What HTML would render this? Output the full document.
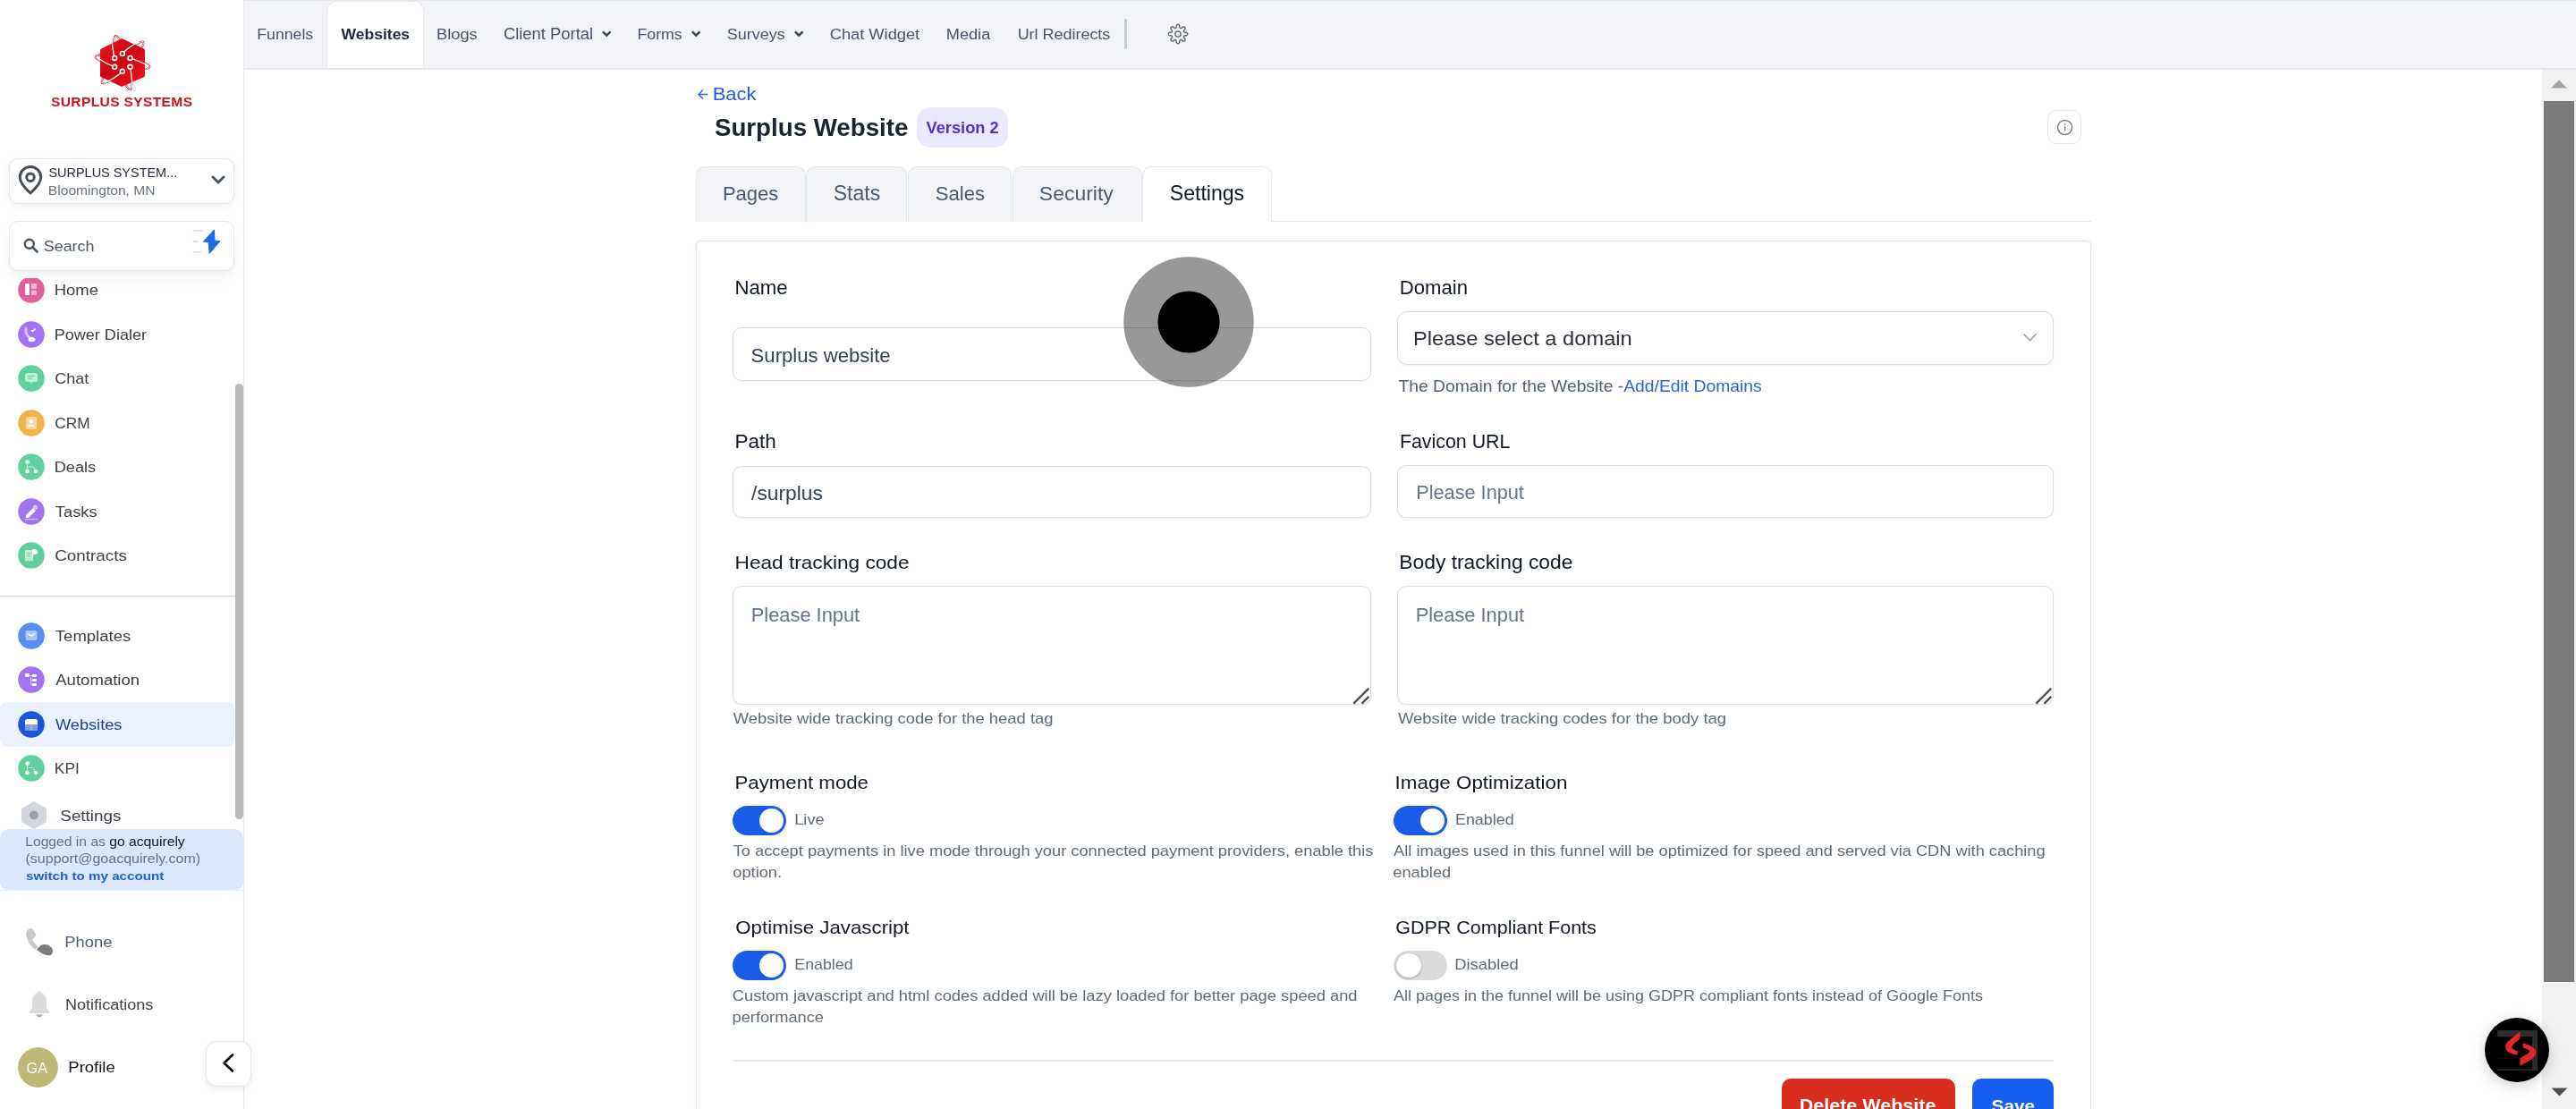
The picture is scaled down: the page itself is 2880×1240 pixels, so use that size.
<!DOCTYPE html>
<html><head><meta charset="utf-8"><title>Surplus Website Settings</title>
<style>
html,body{margin:0;padding:0;width:2880px;height:1240px;overflow:hidden;background:#fff;font-family:"Liberation Sans", sans-serif;}
#root{position:absolute;left:0;top:0;width:2880px;height:1240px;will-change:transform;background:#fff;}
.t{position:absolute;white-space:nowrap;font-family:"Liberation Sans", sans-serif;-webkit-font-smoothing:antialiased;}
.lay{will-change:transform;}
.r{position:absolute;}
</style></head><body><div id="root">
<div class="r" style="left:0.0px;top:0.0px;width:272.0px;height:1240.0px;background:#fff;"></div>
<div class="r" style="left:272.0px;top:0.0px;width:1.0px;height:1240.0px;background:#e6e8ec;"></div>
<svg class="r" style="left:105.5px;top:39.3px;" width="63" height="63" viewBox="123 62 1016 1016">
<defs>
<linearGradient id="lg" x1="0" y1="0" x2="1" y2="1"><stop offset="0" stop-color="#f01420"/><stop offset="0.45" stop-color="#c80812"/><stop offset="1" stop-color="#f2101c"/></linearGradient>
<mask id="outhex"><rect x="0" y="0" width="1300" height="1300" fill="#fff"/><polygon points="610,165 995,345 995,785 610,960 250,785 250,345" fill="#000"/></mask>
</defs>
<g mask="url(#outhex)" fill="none">
<g stroke="#c8141c" stroke-width="34">
<ellipse cx="630" cy="562" rx="500" ry="95" transform="rotate(74.5 630 562)"/>
<ellipse cx="625" cy="560" rx="525" ry="95" transform="rotate(-45 625 560)"/>
<ellipse cx="625" cy="550" rx="495" ry="95" transform="rotate(10.6 625 550)"/>
</g>
<g stroke="#fff" stroke-width="14">
<ellipse cx="630" cy="562" rx="500" ry="95" transform="rotate(74.5 630 562)"/>
<ellipse cx="625" cy="560" rx="525" ry="95" transform="rotate(-45 625 560)"/>
<ellipse cx="625" cy="550" rx="495" ry="95" transform="rotate(10.6 625 550)"/>
</g>
</g>
<polygon points="610,150 1005,335 1005,800 610,975 240,800 240,335" fill="url(#lg)" stroke="url(#lg)" stroke-width="40" stroke-linejoin="round"/>
<g fill="none" stroke="#fff" stroke-width="22" stroke-linecap="round">
<path d="M480 480 C450 350 430 250 430 120"/>
<path d="M620 400 C720 300 820 230 920 190"/>
<path d="M760 480 C880 520 980 560 1080 620"/>
<path d="M760 640 C780 760 800 880 800 1010"/>
<path d="M620 720 C520 820 420 880 300 920"/>
<path d="M480 640 C370 600 260 540 160 470"/>
</g>
<g fill="#d01018" stroke="#fff" stroke-width="26">
<circle cx="480" cy="480" r="40"/><circle cx="620" cy="400" r="40"/><circle cx="760" cy="480" r="40"/>
<circle cx="760" cy="640" r="40"/><circle cx="620" cy="720" r="40"/><circle cx="480" cy="640" r="40"/>
</g></svg>
<div class="t" style="left:57.19px;top:95px;font-size:13.8px;line-height:40px;color:#d0121c;font-weight:700;transform:scaleX(1.13);transform-origin:0 0;letter-spacing:0.3px;">SURPLUS SYSTEMS</div>
<div class="r" style="left:10.0px;top:177.0px;width:251.5px;height:51.0px;border:1px solid #e4e7ec;border-radius:10px;background:#fff;box-shadow:0 3px 8px rgba(16,24,40,0.06);box-sizing:border-box;"></div>
<svg class="r" style="left:20.0px;top:185.0px;" width="28" height="34" viewBox="0 0 28 34"><path d="M14 31 C7 24.5 2.2 19 2.2 13.2 A11.8 11.8 0 0 1 25.8 13.2 C25.8 19 21 24.5 14 31 Z" fill="none" stroke="#474f5b" stroke-width="3" stroke-linejoin="round"/><circle cx="14" cy="13.2" r="4.3" fill="none" stroke="#474f5b" stroke-width="3"/></svg>
<div class="t" style="left:54.45px;top:173px;font-size:14.46px;line-height:40px;color:#1d2939;font-weight:400;">SURPLUS SYSTEM...</div>
<div class="t" style="left:53.85px;top:193px;font-size:15.62px;line-height:40px;color:#6b7483;font-weight:400;transform:scaleY(0.94);transform-origin:0 25px;">Bloomington, MN</div>
<svg class="r" style="left:236.0px;top:196.0px;" width="16" height="11" viewBox="0 0 16 11"><path d="M2 2 L8 8 L14 2" fill="none" stroke="#4a5563" stroke-width="3" stroke-linecap="round" stroke-linejoin="round"/></svg>
<div class="r" style="left:10.0px;top:247.0px;width:251.5px;height:55.5px;border:1px solid #e4e7ec;border-radius:10px;background:#fff;box-shadow:0 12px 20px -6px rgba(16,24,40,0.055), 0 2px 6px rgba(16,24,40,0.035);box-sizing:border-box;"></div>
<svg class="r" style="left:26.0px;top:266.0px;" width="17" height="17" viewBox="0 0 17 17"><circle cx="6.8" cy="6.8" r="5" fill="none" stroke="#4a5563" stroke-width="2.4"/><path d="M10.5 10.5 L15.5 15.5" stroke="#4a5563" stroke-width="2.6" stroke-linecap="round"/></svg>
<div class="t" style="left:48.80px;top:255px;font-size:17.87px;line-height:40px;color:#4b5563;font-weight:400;transform:scaleY(0.89);transform-origin:0 26px;">Search</div>
<svg class="r" style="left:214.0px;top:255.0px;" width="34" height="30" viewBox="0 0 34 30"><path d="M1.8 2.95 H12.6 M1.8 14.9 H7.2 M1.8 26.9 H11.2" stroke="#d9e1ef" stroke-width="1.7"/><path d="M25.45 1.9 L13.3 15.2 L19.14 15.74 L20.22 28.4 L32 14.66 L25.99 14.12 Z" fill="#1a6aea" stroke="#1a6aea" stroke-width="1" stroke-linejoin="round"/></svg>
<svg class="r" style="left:20.0px;top:309.0px;clip-path:inset(2.0px 0 0 0);" width="30" height="30" viewBox="0 0 30 30"><circle cx="15" cy="15" r="14.8" fill="#e0609b"/><rect x="8" y="8" width="5" height="13" rx="1" fill="#fff"/><rect x="15" y="8" width="6" height="6" rx="1" fill="#f4b6d3"/><rect x="15" y="15.5" width="6" height="5.5" rx="1" fill="#f4b6d3"/></svg>
<div class="t" style="left:60.72px;top:304px;font-size:18.46px;line-height:40px;color:#3d4046;font-weight:400;transform:scaleY(0.92);transform-origin:0 26px;">Home</div>
<svg class="r" style="left:20.0px;top:359.3px;" width="30" height="30" viewBox="0 0 30 30"><circle cx="15" cy="15" r="14.8" fill="#a274f2"/><path d="M9 8 C8 12 10 17 14 19" stroke="#d6c2fb" stroke-width="3" fill="none" stroke-linecap="round"/><ellipse cx="15.5" cy="20.5" rx="4" ry="2.6" fill="#fff"/><path d="M15 10 L16.5 11.5 L19.5 8.5" stroke="#fff" stroke-width="1.4" fill="none"/></svg>
<div class="t" style="left:60.76px;top:354px;font-size:18.04px;line-height:40px;color:#3d4046;font-weight:400;transform:scaleY(0.92);transform-origin:0 26px;">Power Dialer</div>
<svg class="r" style="left:20.0px;top:408.1px;" width="30" height="30" viewBox="0 0 30 30"><circle cx="15" cy="15" r="14.8" fill="#62cf9f"/><rect x="8" y="9" width="14" height="10" rx="2.5" fill="#bff0d8"/><path d="M11 12.5 H19 M11 15 H16" stroke="#62cf9f" stroke-width="1.2"/><path d="M14 19 L15 22 L16 19Z" fill="#bff0d8"/></svg>
<div class="t" style="left:61.30px;top:403px;font-size:18.05px;line-height:40px;color:#3d4046;font-weight:400;transform:scaleY(0.92);transform-origin:0 26px;">Chat</div>
<svg class="r" style="left:20.0px;top:458.2px;" width="30" height="30" viewBox="0 0 30 30"><circle cx="15" cy="15" r="14.8" fill="#efb54c"/><rect x="9" y="8" width="12" height="14" rx="2" fill="#f7d9a0"/><circle cx="15" cy="13" r="2.2" fill="#fff"/><path d="M11 19 C12 16 18 16 19 19Z" fill="#fff"/></svg>
<div class="t" style="left:61.34px;top:453px;font-size:17.3px;line-height:40px;color:#3d4046;font-weight:400;transform:scaleY(0.92);transform-origin:0 26px;">CRM</div>
<svg class="r" style="left:20.0px;top:507.2px;" width="30" height="30" viewBox="0 0 30 30"><circle cx="15" cy="15" r="14.8" fill="#62cf9f"/><circle cx="10.5" cy="9.5" r="2.3" fill="#fff"/><circle cx="10.5" cy="20" r="2.3" fill="#fff"/><circle cx="20" cy="20" r="2.3" fill="#fff"/><path d="M10.5 10 V20 M10.5 15 H17 L20 19" stroke="#c6f0dd" stroke-width="1" fill="none"/></svg>
<div class="t" style="left:60.75px;top:502px;font-size:18.11px;line-height:40px;color:#3d4046;font-weight:400;transform:scaleY(0.92);transform-origin:0 26px;">Deals</div>
<svg class="r" style="left:20.0px;top:557.0px;" width="30" height="30" viewBox="0 0 30 30"><circle cx="15" cy="15" r="14.8" fill="#a274f2"/><path d="M9 19 L17 11 L20 14 L12 22 H9Z" fill="#fff"/><circle cx="19.5" cy="10" r="2.6" fill="#d9c6fb"/><path d="M8 23.5 H22" stroke="#d9c6fb" stroke-width="1.3"/></svg>
<div class="t" style="left:61.83px;top:552px;font-size:18.32px;line-height:40px;color:#3d4046;font-weight:400;transform:scaleY(0.92);transform-origin:0 26px;">Tasks</div>
<svg class="r" style="left:20.0px;top:606.2px;" width="30" height="30" viewBox="0 0 30 30"><circle cx="15" cy="15" r="14.8" fill="#62cf9f"/><path d="M8 9 H17 V22 L15 20.5 L13 22 L11 20.5 L8 22Z" fill="#c0eed9"/><path d="M16 8 H19 A3 3 0 0 1 19 14 H17 V18 H16Z" fill="#fff"/><path d="M10 12.5 H14 M10 15 H14" stroke="#62cf9f" stroke-width="1"/></svg>
<div class="t" style="left:61.26px;top:601px;font-size:18.86px;line-height:40px;color:#3d4046;font-weight:400;transform:scaleY(0.92);transform-origin:0 26px;">Contracts</div>
<div class="r" style="left:0.0px;top:665.5px;width:263.0px;height:1.0px;background:#d0d5dd;"></div>
<div class="r" style="left:0.0px;top:785.0px;width:262.0px;height:49.6px;background:#e9f2fe;border-radius:8px;"></div>
<svg class="r" style="left:20.0px;top:696.2px;" width="30" height="30" viewBox="0 0 30 30"><circle cx="15" cy="15" r="14.8" fill="#5b8def"/><rect x="8.5" y="9" width="13" height="11" rx="2" fill="#aac4f8"/><path d="M11 12.5 L15 15 L19 12.5" stroke="#fff" stroke-width="1.4" fill="none"/></svg>
<div class="t" style="left:61.83px;top:691px;font-size:18.53px;line-height:40px;color:#3c4047;font-weight:400;transform:scaleY(0.92);transform-origin:0 26px;">Templates</div>
<svg class="r" style="left:20.0px;top:744.9px;" width="30" height="30" viewBox="0 0 30 30"><circle cx="15" cy="15" r="14.8" fill="#a274f2"/><rect x="8" y="8" width="5" height="4" rx="1" fill="#fff"/><rect x="16" y="9" width="5" height="3" rx="1" fill="#fff"/><rect x="16" y="14" width="5" height="3" rx="1" fill="#fff"/><rect x="16" y="19" width="5" height="3" rx="1" fill="#fff"/><path d="M13 10.5 H16 M14.5 12 V20.5 H16 M14.5 15.5 H16" stroke="#e6d9fd" stroke-width="0.8" fill="none"/></svg>
<div class="t" style="left:62.20px;top:740px;font-size:18.58px;line-height:40px;color:#3c4047;font-weight:400;transform:scaleY(0.92);transform-origin:0 26px;">Automation</div>
<svg class="r" style="left:20.0px;top:795.0px;" width="30" height="30" viewBox="0 0 30 30"><circle cx="15" cy="15" r="14.8" fill="#1f56d8"/><rect x="8" y="9" width="14" height="13" rx="2.5" fill="#fff"/><rect x="8" y="15" width="14" height="7" rx="1" fill="#7d9de8"/><path d="M15 15 V22" stroke="#aec2f1" stroke-width="1"/></svg>
<div class="t" style="left:61.91px;top:790px;font-size:18.22px;line-height:40px;color:#1e3f9a;font-weight:400;transform:scaleY(0.92);transform-origin:0 26px;">Websites</div>
<svg class="r" style="left:20.0px;top:844.1px;" width="30" height="30" viewBox="0 0 30 30"><circle cx="15" cy="15" r="14.8" fill="#62cf9f"/><circle cx="10.5" cy="9.5" r="2.3" fill="#fff"/><circle cx="10.5" cy="20" r="2.3" fill="#fff"/><circle cx="20" cy="20" r="2.3" fill="#fff"/><path d="M10.5 10 V20 M10.5 14.5 H17 L20 19" stroke="#c6f0dd" stroke-width="1" fill="none"/></svg>
<div class="t" style="left:60.81px;top:839px;font-size:17.43px;line-height:40px;color:#3c4047;font-weight:400;transform:scaleY(0.92);transform-origin:0 26px;">KPI</div>
<svg class="r" style="left:23.0px;top:896.0px;" width="30" height="31" viewBox="0 0 30 31"><polygon points="15,1 28,8.5 28,22.5 15,30 2,22.5 2,8.5" fill="#d3d6dc" stroke="#d3d6dc" stroke-width="2" stroke-linejoin="round"/><circle cx="15" cy="15.5" r="5" fill="#9aa1ad"/></svg>
<div class="t" style="left:67.35px;top:892px;font-size:18.84px;line-height:40px;color:#3d4046;font-weight:400;transform:scaleY(0.92);transform-origin:0 26px;">Settings</div>
<div class="r" style="left:263.0px;top:429.0px;width:9.0px;height:486.5px;background:#bababa;border-radius:4.5px;"></div>
<div class="r" style="left:0.0px;top:927.0px;width:272.0px;height:68.0px;background:#dbe8fc;border-radius:10px 10px 8px 8px;"></div>
<div class="t" style="left:28.25px;top:921px;font-size:15.67px;line-height:40px;color:#667085;font-weight:400;transform:scaleY(0.93);transform-origin:0 25px;">Logged in as <span style="color:#101828">go acquirely</span></div>
<div class="t" style="left:28.54px;top:940px;font-size:16.01px;line-height:40px;color:#667085;font-weight:400;transform:scaleY(0.93);transform-origin:0 25px;">(support@goacquirely.com)</div>
<div class="t" style="left:28.97px;top:959px;font-size:15.2px;line-height:40px;color:#1f5fd6;font-weight:700;transform:scaleY(0.9);transform-origin:0 25px;">switch to my account</div>
<div class="r" style="left:0.0px;top:995.0px;width:272.0px;height:1.0px;background:#eceef1;"></div>
<svg class="r" style="left:28px;top:1037px;" width="32" height="32" viewBox="248 328 284 284"><path d="M298 338 Q262 345 258 392 Q262 470 345 548 L378 518 Q335 478 322 445 Q350 425 358 405 L325 345 Q312 333 298 338 Z" fill="#c9c9c9"/><path d="M362 545 L405 505 Q440 488 475 502 L515 532 Q535 572 505 600 Q470 612 428 592 Q390 572 362 545 Z" fill="#7b7b7b"/></svg>
<div class="t" style="left:72.33px;top:1033px;font-size:18.34px;line-height:40px;color:#4f5d75;font-weight:400;transform:scaleY(0.92);transform-origin:0 26px;">Phone</div>
<svg class="r" style="left:31.0px;top:1107.0px;" width="26" height="32" viewBox="0 0 26 32"><path d="M13 1 C11.5 1 11 2 11 3 C6.5 4.5 5 8.5 5 13 V19 C5 21 3 22.5 2 24 C1.5 25 2 26 3.5 26 H22.5 C24 26 24.5 25 24 24 C23 22.5 21 21 21 19 V13 C21 8.5 19.5 4.5 15 3 C15 2 14.5 1 13 1Z" fill="#dcdcdc"/><path d="M9 27.5 H17 C16 29.5 14.5 30.5 13 30.5 C11.5 30.5 10 29.5 9 27.5Z" fill="#b0b0b0"/></svg>
<div class="t" style="left:72.95px;top:1103px;font-size:18.09px;line-height:40px;color:#3f3f46;font-weight:400;transform:scaleY(0.92);transform-origin:0 26px;">Notifications</div>
<svg class="r" style="left:20.0px;top:1171.0px;" width="45" height="45" viewBox="0 0 45 45"><circle cx="22.5" cy="22.5" r="22.4" fill="#bdb978"/></svg>
<div class="t" style="left:29.59px;top:1174px;font-size:16.2px;line-height:40px;color:#ffffff;font-weight:400;">GA</div>
<div class="t" style="left:76.32px;top:1173px;font-size:18.49px;line-height:40px;color:#111111;font-weight:400;transform:scaleY(0.91);transform-origin:0 26px;">Profile</div>
<div class="r" style="left:230.0px;top:1163.7px;width:51.0px;height:51.3px;background:#fff;border:1px solid #e4e7ec;border-radius:12px;box-shadow:0 2px 6px rgba(16,24,40,0.08);box-sizing:border-box;"></div>
<svg class="r" style="left:246.0px;top:1177.0px;" width="18" height="24" viewBox="0 0 18 24"><path d="M14 2.5 L4.5 11.5 L14 20.5" fill="none" stroke="#000" stroke-width="2.6" stroke-linecap="round" stroke-linejoin="round"/></svg>
<div class="r" style="left:273.0px;top:0.0px;width:2607.0px;height:77.0px;background:#f1f3f6;"></div>
<div class="r" style="left:273.0px;top:0.0px;width:2607.0px;height:1.2px;background:#e3e6ea;"></div>
<div class="r" style="left:273.0px;top:76.0px;width:2607.0px;height:1.5px;background:#e3e6ea;"></div>
<div class="r" style="left:365.0px;top:1.2px;width:108.5px;height:75.3px;background:#fff;border:1px solid #e6e8ec;border-bottom:none;border-radius:11px 11px 0 0;box-sizing:border-box;"></div>
<div class="t" style="left:287.28px;top:18px;font-size:17.71px;line-height:40px;color:#475467;font-weight:400;transform:scaleY(0.95);transform-origin:0 26px;">Funnels</div>
<div class="t" style="left:381.60px;top:18px;font-size:17.51px;line-height:40px;color:#1d2939;font-weight:700;transform:scaleY(0.95);transform-origin:0 26px;">Websites</div>
<div class="t" style="left:488.04px;top:18px;font-size:18.28px;line-height:40px;color:#475467;font-weight:400;transform:scaleY(0.95);transform-origin:0 26px;">Blogs</div>
<div class="t" style="left:562.88px;top:18px;font-size:18.42px;line-height:40px;color:#475467;font-weight:400;transform:scaleY(0.95);transform-origin:0 26px;">Client Portal</div>
<div class="t" style="left:712.38px;top:18px;font-size:17.79px;line-height:40px;color:#475467;font-weight:400;transform:scaleY(0.95);transform-origin:0 26px;">Forms</div>
<div class="t" style="left:812.69px;top:18px;font-size:18.02px;line-height:40px;color:#475467;font-weight:400;transform:scaleY(0.95);transform-origin:0 26px;">Surveys</div>
<div class="t" style="left:927.69px;top:18px;font-size:18.27px;line-height:40px;color:#475467;font-weight:400;transform:scaleY(0.95);transform-origin:0 26px;">Chat Widget</div>
<div class="t" style="left:1057.74px;top:18px;font-size:18.19px;line-height:40px;color:#475467;font-weight:400;transform:scaleY(0.95);transform-origin:0 26px;">Media</div>
<div class="t" style="left:1137.65px;top:18px;font-size:17.94px;line-height:40px;color:#475467;font-weight:400;transform:scaleY(0.95);transform-origin:0 26px;">Url Redirects</div>
<svg class="r" style="left:671.9px;top:33.1px;" width="12" height="10" viewBox="0 0 12 10"><path d="M1.9 2.4 L6.2 6.6 L10.5 2.4" fill="none" stroke="#3b4450" stroke-width="2.5" stroke-linecap="butt" stroke-linejoin="miter"/></svg>
<svg class="r" style="left:772.0px;top:33.1px;" width="12" height="10" viewBox="0 0 12 10"><path d="M1.9 2.4 L6.2 6.6 L10.5 2.4" fill="none" stroke="#3b4450" stroke-width="2.5" stroke-linecap="butt" stroke-linejoin="miter"/></svg>
<svg class="r" style="left:887.1px;top:33.1px;" width="12" height="10" viewBox="0 0 12 10"><path d="M1.9 2.4 L6.2 6.6 L10.5 2.4" fill="none" stroke="#3b4450" stroke-width="2.5" stroke-linecap="butt" stroke-linejoin="miter"/></svg>
<div class="r" style="left:1257.0px;top:21.4px;width:3.0px;height:33.2px;background:#c8ccd2;border-radius:1px;"></div>
<svg class="r" style="left:1304.7px;top:26.2px;" width="24" height="24" viewBox="0 0 24 24"><g fill="none" stroke="#66696e" stroke-width="1.45" stroke-linejoin="round"><path d="M12.00 1.30 L12.21 1.31 L12.42 1.36 L12.62 1.43 L12.82 1.53 L13.02 1.66 L13.20 1.83 L13.38 2.03 L13.54 2.28 L13.68 2.60 L13.74 3.27 L13.77 3.94 L13.86 4.26 L13.95 4.52 L14.05 4.73 L14.15 4.91 L14.26 5.06 L14.36 5.19 L14.47 5.29 L14.59 5.38 L14.72 5.44 L14.85 5.48 L14.99 5.51 L15.15 5.51 L15.31 5.50 L15.49 5.46 L15.69 5.41 L15.91 5.33 L16.16 5.22 L16.45 5.05 L16.94 4.60 L17.46 4.17 L17.79 4.04 L18.08 3.97 L18.34 3.96 L18.59 3.97 L18.82 4.01 L19.03 4.08 L19.23 4.18 L19.41 4.30 L19.57 4.43 L19.70 4.59 L19.82 4.77 L19.92 4.97 L19.99 5.18 L20.03 5.41 L20.04 5.66 L20.03 5.92 L19.96 6.21 L19.83 6.54 L19.40 7.06 L18.95 7.55 L18.78 7.84 L18.67 8.09 L18.59 8.31 L18.54 8.51 L18.50 8.69 L18.49 8.85 L18.49 9.01 L18.52 9.15 L18.56 9.28 L18.62 9.41 L18.71 9.53 L18.81 9.64 L18.94 9.74 L19.09 9.85 L19.27 9.95 L19.48 10.05 L19.74 10.14 L20.06 10.23 L20.73 10.26 L21.40 10.32 L21.72 10.46 L21.97 10.62 L22.17 10.80 L22.34 10.98 L22.47 11.18 L22.57 11.38 L22.64 11.58 L22.69 11.79 L22.70 12.00 L22.69 12.21 L22.64 12.42 L22.57 12.62 L22.47 12.82 L22.34 13.02 L22.17 13.20 L21.97 13.38 L21.72 13.54 L21.40 13.68 L20.73 13.74 L20.06 13.77 L19.74 13.86 L19.48 13.95 L19.27 14.05 L19.09 14.15 L18.94 14.26 L18.81 14.36 L18.71 14.47 L18.62 14.59 L18.56 14.72 L18.52 14.85 L18.49 14.99 L18.49 15.15 L18.50 15.31 L18.54 15.49 L18.59 15.69 L18.67 15.91 L18.78 16.16 L18.95 16.45 L19.40 16.94 L19.83 17.46 L19.96 17.79 L20.03 18.08 L20.04 18.34 L20.03 18.59 L19.99 18.82 L19.92 19.03 L19.82 19.23 L19.70 19.41 L19.57 19.57 L19.41 19.70 L19.23 19.82 L19.03 19.92 L18.82 19.99 L18.59 20.03 L18.34 20.04 L18.08 20.03 L17.79 19.96 L17.46 19.83 L16.94 19.40 L16.45 18.95 L16.16 18.78 L15.91 18.67 L15.69 18.59 L15.49 18.54 L15.31 18.50 L15.15 18.49 L14.99 18.49 L14.85 18.52 L14.72 18.56 L14.59 18.62 L14.47 18.71 L14.36 18.81 L14.26 18.94 L14.15 19.09 L14.05 19.27 L13.95 19.48 L13.86 19.74 L13.77 20.06 L13.74 20.73 L13.68 21.40 L13.54 21.72 L13.38 21.97 L13.20 22.17 L13.02 22.34 L12.82 22.47 L12.62 22.57 L12.42 22.64 L12.21 22.69 L12.00 22.70 L11.79 22.69 L11.58 22.64 L11.38 22.57 L11.18 22.47 L10.98 22.34 L10.80 22.17 L10.62 21.97 L10.46 21.72 L10.32 21.40 L10.26 20.73 L10.23 20.06 L10.14 19.74 L10.05 19.48 L9.95 19.27 L9.85 19.09 L9.74 18.94 L9.64 18.81 L9.53 18.71 L9.41 18.62 L9.28 18.56 L9.15 18.52 L9.01 18.49 L8.85 18.49 L8.69 18.50 L8.51 18.54 L8.31 18.59 L8.09 18.67 L7.84 18.78 L7.55 18.95 L7.06 19.40 L6.54 19.83 L6.21 19.96 L5.92 20.03 L5.66 20.04 L5.41 20.03 L5.18 19.99 L4.97 19.92 L4.77 19.82 L4.59 19.70 L4.43 19.57 L4.30 19.41 L4.18 19.23 L4.08 19.03 L4.01 18.82 L3.97 18.59 L3.96 18.34 L3.97 18.08 L4.04 17.79 L4.17 17.46 L4.60 16.94 L5.05 16.45 L5.22 16.16 L5.33 15.91 L5.41 15.69 L5.46 15.49 L5.50 15.31 L5.51 15.15 L5.51 14.99 L5.48 14.85 L5.44 14.72 L5.38 14.59 L5.29 14.47 L5.19 14.36 L5.06 14.26 L4.91 14.15 L4.73 14.05 L4.52 13.95 L4.26 13.86 L3.94 13.77 L3.27 13.74 L2.60 13.68 L2.28 13.54 L2.03 13.38 L1.83 13.20 L1.66 13.02 L1.53 12.82 L1.43 12.62 L1.36 12.42 L1.31 12.21 L1.30 12.00 L1.31 11.79 L1.36 11.58 L1.43 11.38 L1.53 11.18 L1.66 10.98 L1.83 10.80 L2.03 10.62 L2.28 10.46 L2.60 10.32 L3.27 10.26 L3.94 10.23 L4.26 10.14 L4.52 10.05 L4.73 9.95 L4.91 9.85 L5.06 9.74 L5.19 9.64 L5.29 9.53 L5.38 9.41 L5.44 9.28 L5.48 9.15 L5.51 9.01 L5.51 8.85 L5.50 8.69 L5.46 8.51 L5.41 8.31 L5.33 8.09 L5.22 7.84 L5.05 7.55 L4.60 7.06 L4.17 6.54 L4.04 6.21 L3.97 5.92 L3.96 5.66 L3.97 5.41 L4.01 5.18 L4.08 4.97 L4.18 4.77 L4.30 4.59 L4.43 4.43 L4.59 4.30 L4.77 4.18 L4.97 4.08 L5.18 4.01 L5.41 3.97 L5.66 3.96 L5.92 3.97 L6.21 4.04 L6.54 4.17 L7.06 4.60 L7.55 5.05 L7.84 5.22 L8.09 5.33 L8.31 5.41 L8.51 5.46 L8.69 5.50 L8.85 5.51 L9.01 5.51 L9.15 5.48 L9.28 5.44 L9.41 5.38 L9.53 5.29 L9.64 5.19 L9.74 5.06 L9.85 4.91 L9.95 4.73 L10.05 4.52 L10.14 4.26 L10.23 3.94 L10.26 3.27 L10.32 2.60 L10.46 2.28 L10.62 2.03 L10.80 1.83 L10.98 1.66 L11.18 1.53 L11.38 1.43 L11.58 1.36 L11.79 1.31 L12.00 1.30Z"/><circle cx="12" cy="12" r="3.1"/></g></svg>
<svg class="r" style="left:779.0px;top:99.0px;" width="13" height="13" viewBox="0 0 13 13"><path d="M11.5 6.5 H2 M6.5 2 L2 6.5 L6.5 11" fill="none" stroke="#2e62d9" stroke-width="1.5" stroke-linecap="round" stroke-linejoin="round"/></svg>
<div class="t" style="left:796.64px;top:85px;font-size:22.05px;line-height:40px;color:#1f5fd6;font-weight:400;transform:scaleY(0.92);transform-origin:0 27px;">Back</div>
<div class="t" style="left:798.97px;top:123px;font-size:27.69px;line-height:40px;color:#1a2332;font-weight:700;">Surplus Website</div>
<div class="r" style="left:1025.0px;top:120.0px;width:102.0px;height:45.0px;background:#ebe9fe;border-radius:15px;"></div>
<div class="t" style="left:1035.51px;top:123px;font-size:18.25px;line-height:40px;color:#5b2bd6;font-weight:700;">Version 2</div>
<div class="r" style="left:2289.3px;top:123.3px;width:38.2px;height:37.8px;background:#fff;border:1px solid #e4e7ec;border-radius:10px;box-sizing:border-box;"></div>
<svg class="r" style="left:2298.0px;top:132.0px;" width="22" height="22" viewBox="0 0 22 22"><circle cx="10.6" cy="10.5" r="8" fill="none" stroke="#7a808c" stroke-width="1.5"/><path d="M10.6 9.5 V14.5" stroke="#7a808c" stroke-width="1.5"/><circle cx="10.6" cy="6.8" r="0.9" fill="#7a808c"/></svg>
<div class="r" style="left:778.0px;top:247.0px;width:1559.5px;height:1.3px;background:#e6e8eb;"></div>
<div class="r" style="left:778.1px;top:186.0px;width:122.8px;height:62.3px;background:#f2f4f7;border:1px solid #e4e7ec;border-bottom:none;border-radius:10px 10px 0 0;box-sizing:border-box;"></div>
<div class="t" style="left:807.94px;top:197px;font-size:22.02px;line-height:40px;color:#4b5a6f;font-weight:400;">Pages</div>
<div class="r" style="left:901.2px;top:186.0px;width:113.1px;height:62.3px;background:#f2f4f7;border:1px solid #e4e7ec;border-bottom:none;border-radius:10px 10px 0 0;box-sizing:border-box;"></div>
<div class="t" style="left:931.66px;top:196px;font-size:23.09px;line-height:40px;color:#4b5a6f;font-weight:400;">Stats</div>
<div class="r" style="left:1014.9px;top:186.0px;width:116.6px;height:62.3px;background:#f2f4f7;border:1px solid #e4e7ec;border-bottom:none;border-radius:10px 10px 0 0;box-sizing:border-box;"></div>
<div class="t" style="left:1045.81px;top:197px;font-size:22.11px;line-height:40px;color:#4b5a6f;font-weight:400;">Sales</div>
<div class="r" style="left:1132.0px;top:186.0px;width:144.8px;height:62.3px;background:#f2f4f7;border:1px solid #e4e7ec;border-bottom:none;border-radius:10px 10px 0 0;box-sizing:border-box;"></div>
<div class="t" style="left:1161.87px;top:196px;font-size:22.97px;line-height:40px;color:#4b5a6f;font-weight:400;">Security</div>
<div class="r" style="left:1277.3px;top:186.0px;width:145.1px;height:62.3px;background:#fff;border:1px solid #e4e7ec;border-bottom:none;border-radius:10px 10px 0 0;box-sizing:border-box;"></div>
<div class="t" style="left:1307.76px;top:196px;font-size:23.08px;line-height:40px;color:#101828;font-weight:400;">Settings</div>
<div class="r" style="left:777.5px;top:269.0px;width:1560.3px;height:1031.0px;background:#fff;border:1px solid #e3e5e8;border-radius:6px;box-shadow:0 0 4px rgba(16,24,40,0.07);box-sizing:border-box;"></div>
<div class="t" style="left:821.42px;top:302px;font-size:22.2px;line-height:40px;color:#101828;font-weight:400;">Name</div>
<div class="t" style="left:1564.83px;top:302px;font-size:22.12px;line-height:40px;color:#101828;font-weight:400;">Domain</div>
<div class="t" style="left:821.60px;top:474px;font-size:22.46px;line-height:40px;color:#101828;font-weight:400;">Path</div>
<div class="t" style="left:1564.89px;top:474px;font-size:21.39px;line-height:40px;color:#101828;font-weight:400;">Favicon URL</div>
<div class="t" style="left:821.59px;top:609px;font-size:22.63px;line-height:40px;color:#101828;font-weight:400;transform:scaleY(0.93);transform-origin:0 27px;">Head tracking code</div>
<div class="t" style="left:1564.27px;top:608px;font-size:22.83px;line-height:40px;color:#101828;font-weight:400;transform:scaleY(0.93);transform-origin:0 28px;">Body tracking code</div>
<div class="t" style="left:821.52px;top:855px;font-size:22.23px;line-height:40px;color:#101828;font-weight:400;transform:scaleY(0.92);transform-origin:0 27px;">Payment mode</div>
<div class="t" style="left:1559.58px;top:855px;font-size:22.39px;line-height:40px;color:#101828;font-weight:400;transform:scaleY(0.92);transform-origin:0 27px;">Image Optimization</div>
<div class="t" style="left:822.30px;top:1017px;font-size:22.27px;line-height:40px;color:#101828;font-weight:400;transform:scaleY(0.92);transform-origin:0 27px;">Optimise Javascript</div>
<div class="t" style="left:1560.22px;top:1017px;font-size:21.51px;line-height:40px;color:#101828;font-weight:400;transform:scaleY(0.92);transform-origin:0 27px;">GDPR Compliant Fonts</div>
<div class="r" style="left:819.0px;top:366.2px;width:714.0px;height:59.8px;background:#fff;border:1px solid #d9dce0;border-radius:10px;box-shadow:0 1px 2px rgba(16,24,40,0.05);box-sizing:border-box;"></div>
<div class="t" style="left:839.60px;top:378px;font-size:22.12px;line-height:40px;color:#334155;font-weight:400;">Surplus website</div>
<div class="r" style="left:1562.0px;top:348.0px;width:733.8px;height:59.8px;background:#fff;border:1px solid #d9dce0;border-radius:10px;box-shadow:0 1px 2px rgba(16,24,40,0.05);box-sizing:border-box;border-radius:11px;"></div>
<div class="t" style="left:1580.01px;top:358px;font-size:23.68px;line-height:40px;color:#2d3139;font-weight:400;transform:scaleY(0.91);transform-origin:0 28px;">Please select a domain</div>
<svg class="r" style="left:2260.0px;top:371.0px;" width="19" height="13" viewBox="0 0 19 13"><path d="M2.5 2.5 L9.5 9.5 L16.5 2.5" fill="none" stroke="#a3a3a3" stroke-width="1.6"/></svg>
<div class="t" style="left:1563.51px;top:412px;font-size:19.31px;line-height:40px;color:#526074;font-weight:400;transform:scaleY(0.94);transform-origin:0 26px;">The Domain for the Website -<span style="color:#2c64d8">Add/Edit Domains</span></div>
<div class="r" style="left:819.0px;top:520.5px;width:714.0px;height:58.5px;background:#fff;border:1px solid #d9dce0;border-radius:10px;box-shadow:0 1px 2px rgba(16,24,40,0.05);box-sizing:border-box;"></div>
<div class="t" style="left:840.10px;top:531px;font-size:22.77px;line-height:40px;color:#334155;font-weight:400;">/surplus</div>
<div class="r" style="left:1562.0px;top:520.0px;width:733.8px;height:59.3px;background:#fff;border:1px solid #d9dce0;border-radius:10px;box-shadow:0 1px 2px rgba(16,24,40,0.05);box-sizing:border-box;"></div>
<div class="t" style="left:1583.16px;top:531px;font-size:21.72px;line-height:40px;color:#64748b;font-weight:400;">Please Input</div>
<div class="r" style="left:818.8px;top:655.3px;width:714.2px;height:133.2px;background:#fff;border:1px solid #d9dce0;border-radius:10px;box-shadow:0 1px 2px rgba(16,24,40,0.05);box-sizing:border-box;"></div>
<div class="t" style="left:839.75px;top:668px;font-size:21.85px;line-height:40px;color:#64748b;font-weight:400;">Please Input</div>
<div class="r" style="left:1562.0px;top:655.3px;width:733.8px;height:133.2px;background:#fff;border:1px solid #d9dce0;border-radius:10px;box-shadow:0 1px 2px rgba(16,24,40,0.05);box-sizing:border-box;"></div>
<div class="t" style="left:1582.65px;top:668px;font-size:21.86px;line-height:40px;color:#64748b;font-weight:400;">Please Input</div>
<svg class="r" style="left:1509.0px;top:764.7px;" width="24" height="24" viewBox="0 0 24 24"><path d="M5.2 20.8 L20.4 5.6 M14.4 20.8 L20.4 14.8" stroke="#4f4f4f" stroke-width="2.4" stroke-linecap="square"/></svg>
<svg class="r" style="left:2271.5px;top:764.7px;" width="24" height="24" viewBox="0 0 24 24"><path d="M5.2 20.8 L20.4 5.6 M14.4 20.8 L20.4 14.8" stroke="#4f4f4f" stroke-width="2.4" stroke-linecap="square"/></svg>
<div class="t" style="left:819.71px;top:783px;font-size:18.41px;line-height:40px;color:#5e6b76;font-weight:400;transform:scaleY(0.94);transform-origin:0 26px;">Website wide tracking code for the head tag</div>
<div class="t" style="left:1562.91px;top:783px;font-size:18.48px;line-height:40px;color:#5e6b76;font-weight:400;transform:scaleY(0.94);transform-origin:0 26px;">Website wide tracking codes for the body tag</div>
<div class="r" style="left:819.0px;top:901.0px;width:60.0px;height:33.0px;background:#1a5ce8;border-radius:17px;"></div>
<div class="r" style="left:848.5px;top:904.0px;width:27.5px;height:27.0px;background:#fff;border-radius:50%;"></div>
<div class="r" style="left:1558.0px;top:901.0px;width:60.0px;height:33.0px;background:#1a5ce8;border-radius:17px;"></div>
<div class="r" style="left:1587.5px;top:904.0px;width:27.5px;height:27.0px;background:#fff;border-radius:50%;"></div>
<div class="r" style="left:819.0px;top:1063.3px;width:60.0px;height:33.0px;background:#1a5ce8;border-radius:17px;"></div>
<div class="r" style="left:848.5px;top:1066.3px;width:27.5px;height:27.0px;background:#fff;border-radius:50%;"></div>
<div class="r" style="left:1558.0px;top:1063.3px;width:60.0px;height:33.0px;background:#dcdcdc;border-radius:17px;"></div>
<div class="r" style="left:1561.0px;top:1066.3px;width:27.5px;height:27.0px;background:#fff;border-radius:50%;box-shadow:0 1px 3px rgba(0,0,0,0.3);"></div>
<div class="t" style="left:888.24px;top:896px;font-size:18.19px;line-height:40px;color:#5e6b76;font-weight:400;transform:scaleY(0.92);transform-origin:0 26px;">Live</div>
<div class="t" style="left:1626.97px;top:896px;font-size:17.9px;line-height:40px;color:#5e6b76;font-weight:400;transform:scaleY(0.92);transform-origin:0 26px;">Enabled</div>
<div class="t" style="left:888.28px;top:1058px;font-size:17.79px;line-height:40px;color:#5e6b76;font-weight:400;transform:scaleY(0.92);transform-origin:0 26px;">Enabled</div>
<div class="t" style="left:1626.13px;top:1058px;font-size:18.42px;line-height:40px;color:#5e6b76;font-weight:400;transform:scaleY(0.92);transform-origin:0 26px;">Disabled</div>
<div class="t" style="left:819.63px;top:931px;font-size:18.27px;line-height:40px;color:#5e6b76;font-weight:400;transform:scaleY(0.94);transform-origin:0 26px;">To accept payments in live mode through your connected payment providers, enable this</div>
<div class="t" style="left:819.27px;top:955px;font-size:18.25px;line-height:40px;color:#5e6b76;font-weight:400;transform:scaleY(0.94);transform-origin:0 26px;">option.</div>
<div class="t" style="left:1558.10px;top:931px;font-size:18.21px;line-height:40px;color:#5e6b76;font-weight:400;transform:scaleY(0.94);transform-origin:0 26px;">All images used in this funnel will be optimized for speed and served via CDN with caching</div>
<div class="t" style="left:1557.37px;top:955px;font-size:18.2px;line-height:40px;color:#5e6b76;font-weight:400;transform:scaleY(0.94);transform-origin:0 26px;">enabled</div>
<div class="t" style="left:818.78px;top:1093px;font-size:18.31px;line-height:40px;color:#5e6b76;font-weight:400;transform:scaleY(0.94);transform-origin:0 26px;">Custom javascript and html codes added will be lazy loaded for better page speed and</div>
<div class="t" style="left:818.51px;top:1117px;font-size:18.25px;line-height:40px;color:#5e6b76;font-weight:400;transform:scaleY(0.94);transform-origin:0 26px;">performance</div>
<div class="t" style="left:1558.10px;top:1093px;font-size:17.99px;line-height:40px;color:#5e6b76;font-weight:400;transform:scaleY(0.94);transform-origin:0 26px;">All pages in the funnel will be using GDPR compliant fonts instead of Google Fonts</div>
<div class="r" style="left:819.0px;top:1185.0px;width:1477.0px;height:1.5px;background:#e6e8ec;"></div>
<div class="r" style="left:1992.2px;top:1206.2px;width:193.8px;height:63.8px;background:#d92d20;border-radius:10px;"></div>
<div class="t" style="left:2011.70px;top:1216px;font-size:21.53px;line-height:40px;color:#fff;font-weight:700;transform:scaleY(0.9);transform-origin:0 27px;">Delete Website</div>
<div class="r" style="left:2205.3px;top:1206.2px;width:90.7px;height:63.8px;background:#155eef;border-radius:10px;"></div>
<div class="t" style="left:2226.58px;top:1216px;font-size:20.7px;line-height:40px;color:#fff;font-weight:700;transform:scaleY(0.9);transform-origin:0 27px;">Save</div>
<svg class="r" style="left:1256.2px;top:287.0px;" width="146" height="146" viewBox="0 0 146 146"><circle cx="73" cy="73" r="72.8" fill="rgba(0,0,0,0.405)"/><circle cx="73" cy="73" r="34.6" fill="#000"/></svg>
<div class="r" style="left:2842.0px;top:77.5px;width:38.0px;height:1162.5px;background:#f1f1f1;"></div>
<svg class="r" style="left:2851.0px;top:89.0px;" width="20" height="10" viewBox="0 0 20 10"><path d="M1 9.5 L10 0.5 L19 9.5Z" fill="#a3a3a3"/></svg>
<div class="r" style="left:2844.0px;top:113.0px;width:34.0px;height:984.7px;background:#7b7b7b;"></div>
<svg class="r" style="left:2851.5px;top:1215.5px;" width="19" height="10" viewBox="0 0 19 10"><path d="M0.5 0.5 L18.5 0.5 L9.5 9.5Z" fill="#505050"/></svg>
<div class="r" style="left:2778.0px;top:1138.3px;width:72.0px;height:72.0px;background:#000;border-radius:50%;box-shadow:0 4px 16px rgba(0,0,0,0.18);"></div>
<svg class="r" style="left:2778px;top:1138px;" width="72" height="72" viewBox="29 29 1051 1051"><path d="M235 235 H890 V890 H235 V870 H805 V340 H235 Z" fill="#2c2c2c"/><path d="M605 250 L605 365 L505 455 Q445 510 500 545 L565 575 L560 640 Q430 625 380 555 Q335 480 420 405 Z" fill="#e3242b"/><path d="M650 445 Q790 470 850 545 Q895 625 800 705 L605 815 L605 690 L735 610 Q790 570 720 540 L650 515 Z" fill="#e3242b"/><path d="M245 690 H590" stroke="#3a0a0a" stroke-width="12" stroke-dasharray="30 22"/></svg>
</div></body></html>
